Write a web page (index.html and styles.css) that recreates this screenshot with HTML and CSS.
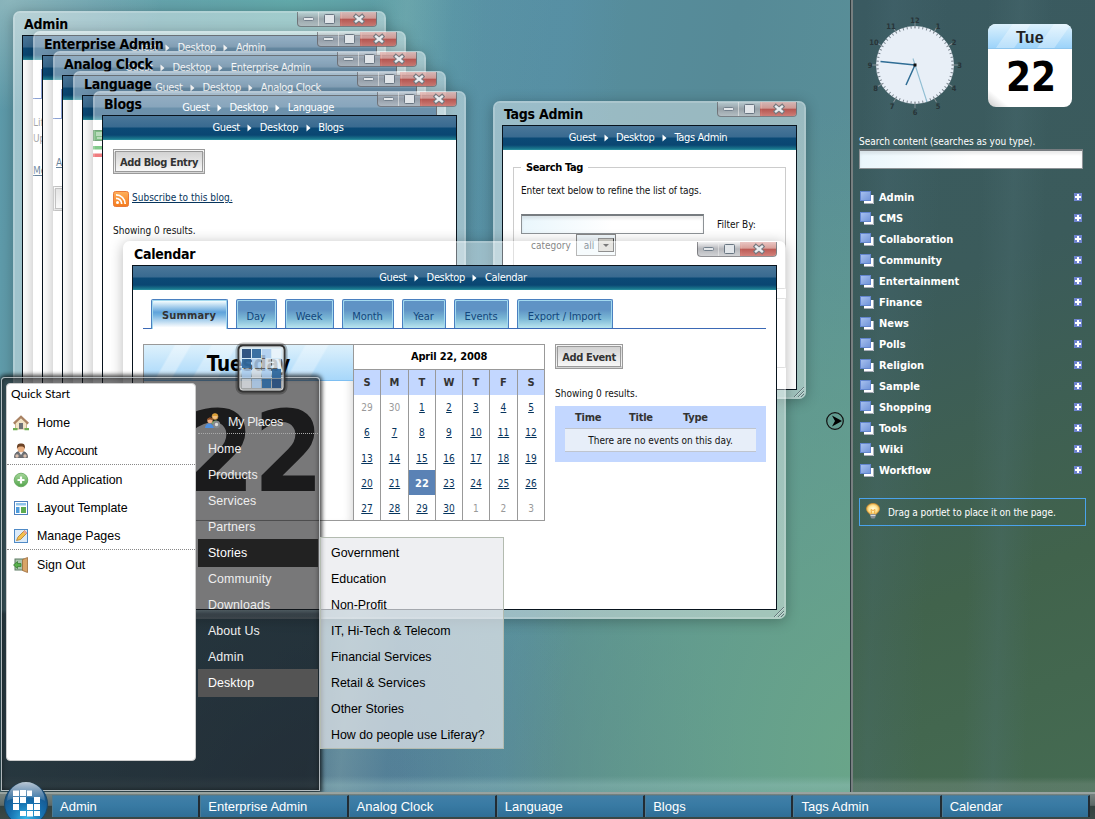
FILE: index.html
```html
<!DOCTYPE html>
<html lang="en">
<head>
<meta charset="utf-8">
<title>Desktop</title>
<link rel="stylesheet" href="styles.css">
</head>
<body>
<svg class="defs" width="0" height="0">
  <defs>
    <linearGradient id="gBlue" x1="0" y1="0" x2="1" y2="1"><stop offset="0" stop-color="#a9c2ef"/><stop offset="1" stop-color="#6f93d8"/></linearGradient>
    <linearGradient id="gGreen" x1="0" y1="0" x2="0" y2="1"><stop offset="0" stop-color="#a5d69a"/><stop offset="1" stop-color="#55a54d"/></linearGradient>
    <linearGradient id="gRss" x1="0" y1="0" x2="0" y2="1"><stop offset="0" stop-color="#ffb05c"/><stop offset="1" stop-color="#f47a1c"/></linearGradient>
    <radialGradient id="gBulb"><stop offset="0" stop-color="#fffbe0"/><stop offset=".6" stop-color="#ffe79a"/><stop offset="1" stop-color="#e9b04c"/></radialGradient>
    <radialGradient id="gOrb" cx=".5" cy=".85" r=".8"><stop offset="0" stop-color="#35b6e8"/><stop offset=".5" stop-color="#176fae"/><stop offset="1" stop-color="#164a7c"/></radialGradient>
    <linearGradient id="gShine" x1="0" y1="0" x2="0" y2="1"><stop offset="0" stop-color="#fff" stop-opacity=".7"/><stop offset="1" stop-color="#fff" stop-opacity=".1"/></linearGradient>
  </defs>
  <symbol id="arrow" viewBox="0 0 5 8"><path d="M.5 0.500 4.500 4 .5 7.500z" fill="#fff"/></symbol>
  <symbol id="controls" viewBox="0 0 80 15">
    <rect x="6.500" y="6.500" width="10" height="3" rx="1" fill="#e4e7ea" stroke="#74818d"/>
    <rect x="27.500" y="3.500" width="10" height="9" rx="1" fill="#e2e6ea" stroke="#687581"/>
    <path d="M59 5.500l6 5M65 5.500l-6 5" stroke="#77797f" stroke-width="4.500" stroke-linecap="square"/>
    <path d="M59 5.500l6 5M65 5.500l-6 5" stroke="#e9edf0" stroke-width="2.300" stroke-linecap="square"/>
  </symbol>
  <symbol id="grip" viewBox="0 0 10 10"><path d="M0 10 10 0M4 10l6-6M7 10l3-3" stroke="#62777a" fill="none"/><path d="M1 10 10 1M5 10l5-5" stroke="#d9e5e5" stroke-width=".7" fill="none"/></symbol>
  <symbol id="category" viewBox="0 0 14 13"><rect x="4" y="4" width="10" height="9" fill="#fff"/><path d="M4 12.500h9.500V4" stroke="#a9aeb8" fill="none"/><rect x=".5" y=".5" width="10" height="9" fill="url(#gBlue)" stroke="#6386cf"/></symbol>
  <symbol id="plus" viewBox="0 0 8 8"><rect width="8" height="8" fill="#6f84cf"/><path d="M4 1v6M1 4h6" stroke="#fff" stroke-width="2"/></symbol>
</svg>

<main class="desktop">
  <section class="window w-admin">
    <header class="title">Admin</header><div class="controls"><svg><use href="#controls"/></svg></div>
    <div class="pane">
      <nav class="crumbs">Guest<svg><use href="#arrow"/></svg>Desktop<svg><use href="#arrow"/></svg>Admin</nav>
      <div class="peek admin-peek"><i class="peek-tab"></i><p>Lifetime</p><p>Uptime</p><a>Memory</a></div>
    </div>
  </section>
  <section class="window w-enterprise">
    <header class="title">Enterprise Admin</header><div class="controls"><svg><use href="#controls"/></svg></div>
    <div class="pane">
      <nav class="crumbs">Guest<svg><use href="#arrow"/></svg>Desktop<svg><use href="#arrow"/></svg>Enterprise Admin</nav>
      <div class="peek ent-peek"><i class="peek-tab"></i><a>Add</a><button class="btn">Search</button></div>
    </div>
  </section>
  <section class="window w-clock">
    <header class="title">Analog Clock</header><div class="controls"><svg><use href="#controls"/></svg></div>
    <div class="pane"><nav class="crumbs">Guest<svg><use href="#arrow"/></svg>Desktop<svg><use href="#arrow"/></svg>Analog Clock</nav></div>
  </section>
  <section class="window w-language">
    <header class="title">Language</header><div class="controls"><svg><use href="#controls"/></svg></div>
    <div class="pane">
      <nav class="crumbs">Guest<svg><use href="#arrow"/></svg>Desktop<svg><use href="#arrow"/></svg>Language</nav>
      <div class="flags">
        <svg viewBox="0 0 16 11"><rect x=".5" y=".5" width="15" height="10" fill="#2f9238" stroke="#1c6626"/><path d="M3 3h9M3 5h8M4 8h8" stroke="#e8f3e5"/></svg>
        <svg viewBox="0 0 16 11"><rect width="16" height="11" fill="#fff"/><rect width="16" height="3.500" fill="#2fa53c"/><rect y="7.500" width="16" height="3.500" fill="#e5262b"/></svg>
      </div>
    </div>
  </section>
  <section class="window w-blogs">
    <header class="title">Blogs</header><div class="controls"><svg><use href="#controls"/></svg></div>
    <div class="pane">
      <nav class="crumbs">Guest<svg><use href="#arrow"/></svg>Desktop<svg><use href="#arrow"/></svg>Blogs</nav>
      <div class="blogs-body">
        <button class="btn wide">Add Blog Entry</button>
        <p class="feed"><svg viewBox="0 0 16 16"><rect x=".5" y=".5" width="15" height="15" rx="2" fill="url(#gRss)" stroke="#e8793a"/><circle cx="4.500" cy="11.500" r="1.500" fill="#fff"/><path d="M3 7.300a5.700 5.700 0 0 1 5.700 5.700M3 3.800A9.200 9.200 0 0 1 12.200 13" stroke="#fff" stroke-width="1.700" fill="none"/></svg><a>Subscribe to this blog.</a></p>
        <p>Showing 0 results.</p>
      </div>
    </div>
  </section>

  <section class="window w-tags">
    <header class="title">Tags Admin</header><div class="controls"><svg><use href="#controls"/></svg></div>
    <div class="pane">
      <nav class="crumbs">Guest<svg><use href="#arrow"/></svg>Desktop<svg><use href="#arrow"/></svg>Tags Admin</nav>
      <fieldset class="tag-search">
        <legend>Search Tag</legend>
        <p>Enter text below to refine the list of tags.</p>
        <div class="filter"><span class="field"></span><label>Filter By:</label></div>
        <div class="category"><label>category</label><span class="select">all<b></b></span></div>
      </fieldset>
      <div class="tag-results"></div>
    </div>
    <svg class="grip"><use href="#grip"/></svg>
  </section>

  <section class="window w-calendar">
    <header class="title">Calendar</header><div class="controls"><svg><use href="#controls"/></svg></div>
    <div class="pane">
      <nav class="crumbs">Guest<svg><use href="#arrow"/></svg>Desktop<svg><use href="#arrow"/></svg>Calendar</nav>
      <div class="tabs">
        <a class="t-summary on">Summary</a><a class="t-day">Day</a><a class="t-week">Week</a><a class="t-month">Month</a><a class="t-year">Year</a><a class="t-events">Events</a><a class="t-export">Export / Import</a>
      </div>
      <div class="cal-body">
        <div class="today"><h2>Tuesday</h2><strong>22</strong></div>
        <table class="month">
          <colgroup><col class="c27"><col class="c28"><col class="c27"><col class="c27"><col class="c27"><col class="c28"><col class="c27"></colgroup>
          <tr><th colspan="7" class="month-name">April 22, 2008</th></tr>
          <tr class="days"><th>S</th><th>M</th><th>T</th><th>W</th><th>T</th><th>F</th><th>S</th></tr>
          <tr><td class="off">29</td><td class="off">30</td><td>1</td><td>2</td><td>3</td><td>4</td><td>5</td></tr>
          <tr><td>6</td><td>7</td><td>8</td><td>9</td><td>10</td><td>11</td><td>12</td></tr>
          <tr><td>13</td><td>14</td><td>15</td><td>16</td><td>17</td><td>18</td><td>19</td></tr>
          <tr><td>20</td><td>21</td><td class="now">22</td><td>23</td><td>24</td><td>25</td><td>26</td></tr>
          <tr><td>27</td><td>28</td><td>29</td><td>30</td><td class="off">1</td><td class="off">2</td><td class="off">3</td></tr>
        </table>
        <div class="events">
          <button class="btn">Add Event</button>
          <p>Showing 0 results.</p>
          <div class="event-table"><div class="event-head"><b>Time</b><b>Title</b><b>Type</b></div><div class="event-none">There are no events on this day.</div></div>
        </div>
      </div>
    </div>
    <svg class="grip"><use href="#grip"/></svg>
  </section>

  <svg class="collapse" viewBox="0 0 18 18"><circle cx="9" cy="9" r="8.300" fill="none" stroke="#111" stroke-width="1.200"/><path d="M6 3.500 16 9 6 14.500 9 9z" fill="#000"/></svg>

  <aside class="sidebar">
    <div class="gadgets">
      <svg class="clock" viewBox="-50 -50 100 100">
        <circle r="39" fill="#e8eff7"/>
        <circle r="37.700" fill="none" stroke="#77828c" stroke-width="2.600" pathLength="360" stroke-dasharray="1.500 4.500" stroke-dashoffset=".75"/>
        <circle r="40" fill="none" stroke="#8b959b" stroke-width="6" pathLength="360" stroke-dasharray="1.300 28.700" stroke-dashoffset=".65"/>
        <g class="numerals"><text y="-42.500">12</text><text x="23" y="-36">1</text><text x="39" y="-20">2</text><text x="44.500" y="3">3</text><text x="39" y="26">4</text><text x="23" y="44">5</text><text y="49.500">6</text><text x="-23" y="44">7</text><text x="-39.500" y="26">8</text><text x="-45" y="3">9</text><text x="-41" y="-20">10</text><text x="-24" y="-36">11</text></g>
        <path d="M-2-6.500 12 37" stroke="#8fbdd2" stroke-width="1.100"/>
        <path d="M0 0-34.500-3.500M0 0-9 20" stroke="#2f6d95" stroke-width="1.500"/>
        <rect x="-1.500" y="-1.500" width="3" height="3" fill="#111"/>
      </svg>
      <div class="date"><span>Tue</span><strong>22</strong></div>
    </div>
    <label class="search-label">Search content (searches as you type).</label>
    <div class="field search"></div>
    <ul class="categories">
      <li><svg class="ic"><use href="#category"/></svg>Admin<svg class="pl"><use href="#plus"/></svg></li>
      <li><svg class="ic"><use href="#category"/></svg>CMS<svg class="pl"><use href="#plus"/></svg></li>
      <li><svg class="ic"><use href="#category"/></svg>Collaboration<svg class="pl"><use href="#plus"/></svg></li>
      <li><svg class="ic"><use href="#category"/></svg>Community<svg class="pl"><use href="#plus"/></svg></li>
      <li><svg class="ic"><use href="#category"/></svg>Entertainment<svg class="pl"><use href="#plus"/></svg></li>
      <li><svg class="ic"><use href="#category"/></svg>Finance<svg class="pl"><use href="#plus"/></svg></li>
      <li><svg class="ic"><use href="#category"/></svg>News<svg class="pl"><use href="#plus"/></svg></li>
      <li><svg class="ic"><use href="#category"/></svg>Polls<svg class="pl"><use href="#plus"/></svg></li>
      <li><svg class="ic"><use href="#category"/></svg>Religion<svg class="pl"><use href="#plus"/></svg></li>
      <li><svg class="ic"><use href="#category"/></svg>Sample<svg class="pl"><use href="#plus"/></svg></li>
      <li><svg class="ic"><use href="#category"/></svg>Shopping<svg class="pl"><use href="#plus"/></svg></li>
      <li><svg class="ic"><use href="#category"/></svg>Tools<svg class="pl"><use href="#plus"/></svg></li>
      <li><svg class="ic"><use href="#category"/></svg>Wiki<svg class="pl"><use href="#plus"/></svg></li>
      <li><svg class="ic"><use href="#category"/></svg>Workflow<svg class="pl"><use href="#plus"/></svg></li>
    </ul>
    <div class="hint"><svg viewBox="0 0 14 16"><path d="M7 .5C3 .5.5 3 .5 6c0 2.500 2.500 4 3.500 5.500h6C11 10 13.500 8.500 13.500 6c0-3-2.500-5.500-6.500-5.500z" fill="url(#gBulb)" stroke="#d9922c" stroke-width=".7"/><path d="M4.500 11h5v3l-1 1.500h-3l-1-1.500z" fill="#8d9196"/><path d="M5.500 10.500 5 6.500l2 1 2-1-.5 4" fill="none" stroke="#f0a93a"/><path d="M4.500 12.500h5" stroke="#d6d9dc"/></svg>Drag a portlet to place it on the page.</div>
  </aside>
</main>

<section class="start-menu">
  <div class="quick">
    <h3>Quick Start</h3>
    <ul>
      <li><svg viewBox="0 0 16 16"><path d="M2.500 7.500 8 2.500l5.500 5V14h-11z" fill="#f2e4c6" stroke="#b69b68" stroke-width=".7"/><path d="M.8 8.600 8 1.700l7.200 6.900" fill="none" stroke="#a98263" stroke-width="2.200"/><rect x="6" y="8" width="4" height="6" fill="#6f7276"/><path d="M0 14.200h4.500M11.500 14.200H16" stroke="#6fae52" stroke-width="2.200"/></svg>Home</li>
      <li><svg viewBox="0 0 16 16"><path d="M1.500 14.500c0-5 2.500-6 6.500-6s6.500 1 6.500 6z" fill="#6e7074" stroke="#494b4f" stroke-width=".7"/><path d="m6 9 2 3 2-3z" fill="#f4f4f4"/><circle cx="8" cy="5.600" r="3.600" fill="#eab083"/><path d="M4 6C3.700 1.500 5 .5 8 .5S12.300 1.500 12 6c-.8-2-2-2.500-4-2.500S4.800 4 4 6z" fill="#6b4225"/><circle cx="4" cy="13" r="1.700" fill="#d9bfae"/><circle cx="12" cy="13" r="1.700" fill="#d9bfae"/></svg><span class="tight">My Account</span></li>
      <li class="rule"><svg viewBox="0 0 16 16"><circle cx="8" cy="8" r="6.800" fill="url(#gGreen)" stroke="#5fa558" stroke-width=".8"/><path d="M8 4.500v7M4.500 8h7" stroke="#fff" stroke-width="2.200"/></svg>Add Application</li>
      <li><svg viewBox="0 0 16 16"><rect x="1.500" y="1.500" width="13" height="13" fill="#fff" stroke="#4f81bd"/><rect x="3" y="3" width="10" height="2.500" fill="#8fc3ea"/><rect x="3" y="7" width="3.500" height="6" fill="#4d9bdb"/><rect x="8" y="7" width="5" height="6" fill="#5dab51"/></svg>Layout Template</li>
      <li><svg viewBox="0 0 16 16"><rect x="1.500" y="1.500" width="13" height="13" fill="#dcebf9" stroke="#4f8ac6"/><path d="M3.500 12.500 5 9l6.500-6.500 2.500 2.500L7.500 11.500z" fill="#f5c04d" stroke="#a97b2f" stroke-width=".8"/><path d="m11 3 2.500 2.500" stroke="#eaa1a0" stroke-width="2"/></svg>Manage Pages</li>
      <li class="rule"><svg viewBox="0 0 16 16"><rect x="2" y="2" width="9" height="11" fill="#aac4ae" stroke="#5d7b62"/><path d="m9.500 2.500 5-2v15l-5-2z" fill="#d8a467" stroke="#9b6a38" stroke-width=".8"/><path d="M.5 8 4.500 4.500v2H8v3H4.500v2z" fill="#58b04b" stroke="#2f7a2a" stroke-width=".7"/></svg>Sign Out</li>
    </ul>
  </div>
  <div class="places">
    <h3><svg viewBox="0 0 16 16"><circle cx="10" cy="3.500" r="3" fill="#f0be80" stroke="#b9832f" stroke-width=".7"/><path d="M7.500 3c0-3 5-3 5 0" fill="#dba034"/><path d="M7 11c0-4 6-5 7-1z" fill="#74b95c"/><circle cx="5" cy="7.500" r="2.700" fill="#efb184"/><path d="M2.200 7.500c0-4 5.600-4 5.600 0-1.500-1.500-4-1.500-5.600 0z" fill="#8a4b22"/><path d="M0 15c0-6 8-6 9 0z" fill="#4d8fe0"/><circle cx="11.500" cy="11.500" r="2.700" fill="#ddd" stroke="#85898d" stroke-width="2"/></svg><span class="tight">My Places</span></h3>
    <ul><li>Home</li><li>Products</li><li>Services</li><li>Partners</li><li class="hover">Stories</li><li>Community</li><li>Downloads</li><li>About Us</li><li>Admin</li><li class="here">Desktop</li></ul>
  </div>
</section>
<svg class="theme-badge" viewBox="0 0 54 54">
  <rect x="3" y="3" width="47" height="47" rx="5" fill="none" stroke="#000" stroke-opacity=".25" stroke-width="5"/>
  <rect x="3.500" y="3.500" width="46" height="46" rx="4" fill="#e4eaee" fill-opacity=".4" stroke="#333" stroke-width="2"/>
  <rect x="5" y="5" width="43" height="43" rx="3" fill="none" stroke="#eee" stroke-opacity=".7"/>
  <g><path fill="#294e7c" fill-opacity=".95" d="M7 7h9v9H7zM37 37h9v9h-9z"/><path fill="#2c659a" fill-opacity=".92" d="M17 7h9v9h-9zM7 17h9v9H7zM37 27h9v9h-9zM27 37h9v9h-9z"/><path fill="#a8c9ee" fill-opacity=".75" d="M27 7h9v9h-9zM17 17h9v9h-9zM7 27h9v9H7zM27 27h9v9h-9zM17 37h9v9h-9z"/><path fill="#eff7fc" fill-opacity=".7" d="M37 7h9v9h-9zM37 17h9v9h-9z"/><path fill="#d8dde2" fill-opacity=".7" d="M27 17h9v9h-9zM17 27h9v9h-9zM7 37h9v9H7z"/></g>
</svg>

<ul class="submenu"><li>Government</li><li>Education</li><li>Non-Profit</li><li>IT, Hi-Tech &amp; Telecom</li><li>Financial Services</li><li>Retail &amp; Services</li><li>Other Stories</li><li>How do people use Liferay?</li></ul>

<footer class="taskbar"><a>Admin</a><a>Enterprise Admin</a><a>Analog Clock</a><a>Language</a><a>Blogs</a><a>Tags Admin</a><a>Calendar</a></footer>
<svg class="orb" viewBox="0 0 44 38">
  <circle cx="22" cy="23" r="21.500" fill="url(#gOrb)" stroke="#1a4768"/>
  <path d="M3 20a19 19 0 0 1 38 0C32 15 12 15 3 20z" fill="url(#gShine)"/>
  <path d="M9 9.500h6v5.500H9zM16 9h6v6h-6zM23 9.500h5v5.500h-5zM9 16h6v6H9zM16 16h6v6h-6zM30 16h6v6h-6zM9 23h6v6H9zM23 23h6v6h-6zM30 23h6v6h-6zM16 30h6v5h-6zM23 30h6v5.500h-6zM30 30h6v5h-6z" fill="#fff"/>
</svg>
</body>
</html>
```

FILE: styles.css
```css
* { box-sizing: border-box; }
body { margin: 0; width: 1095px; height: 819px; position: relative; overflow: hidden; font: 10px "DejaVu Sans Condensed", "DejaVu Sans", sans-serif; font-stretch: condensed; color: #111; }
ul, h2, h3, p { margin: 0; padding: 0; list-style: none; }
svg { display: block; flex: none; }
.defs { position: absolute; }

.desktop {
  position: absolute; inset: 0 0 27px 0;
  background:
    linear-gradient(to bottom, transparent 776px, rgba(160,200,200,.35) 785px, rgba(160,200,200,.25)),
    radial-gradient(ellipse 150px 110px at 10px 0, rgba(170,200,200,.6), transparent 100%),
    radial-gradient(ellipse 260px 400px at 290px 0, rgba(100,180,172,.6), transparent 75%),
    linear-gradient(95deg, transparent 32%, rgba(150,190,192,.28) 35%, rgba(90,150,180,.2) 39%, rgba(90,150,185,.22) 49%, transparent 54%),
    radial-gradient(ellipse 460px 650px at 860px 760px, rgba(106,166,136,.95), rgba(106,166,136,.5) 55%, transparent 100%),
    radial-gradient(ellipse 420px 300px at 330px 800px, rgba(80,112,136,.8), transparent),
    linear-gradient(100deg, #5c99a9 0%, #659fac 12%, #568e9e 45%, #568a97 60%, #5a9198 78%, #5f9a9c 100%);
}

/* windows */
.window { position: absolute; padding: 22px 7px 7px; width: 373px; height: 400px; border: 2px solid rgba(255,255,255,.5); border-radius: 7px; background: rgba(255,255,255,.4); background-clip: padding-box; box-shadow: 0 2px 14px rgba(0,0,0,.28); }
.w-admin { left: 13px; top: 11px; }
.w-enterprise { left: 33px; top: 31px; }
.w-clock { left: 53px; top: 51px; }
.w-language { left: 73px; top: 71px; }
.w-blogs { left: 93px; top: 91px; }
.w-tags { left: 493px; top: 101px; width: 313px; height: 298px; }
.w-calendar { left: 123px; top: 241px; width: 663px; height: 378px; }
.title { position: absolute; left: 9px; top: 1px; font-weight: bold; font-size: 14px; letter-spacing: -.25px; line-height: 20px; color: #000; white-space: nowrap; }
.controls { position: absolute; right: 7px; top: -1px; width: 80px; height: 15px; border: 1px solid rgba(80,80,85,.6); border-top: 0; border-radius: 0 0 4px 4px; background: linear-gradient(rgba(225,225,228,.4), rgba(150,152,158,.7) 50%, rgba(190,192,196,.7)); overflow: hidden; }
.controls::before { content: ""; position: absolute; left: 20px; top: 0; width: 22px; height: 15px; border: solid rgba(235,235,235,.6); border-width: 0 1px; }
.controls::after { content: ""; position: absolute; left: 42px; right: 0; top: 0; height: 15px; background: linear-gradient(rgba(230,170,165,.6), rgba(230,150,140,.7) 40%, rgba(190,70,62,.8) 50%, rgba(215,115,105,.8)); }
.controls svg { position: absolute; z-index: 1; left: -1px; top: -1px; width: 80px; height: 15px; }
.pane { height: 100%; background: #fff; border: 1px solid #08131d; overflow: hidden; }
.crumbs { height: 24px; padding: 0 3px 1px 0; display: flex; align-items: center; justify-content: center; gap: 7.500px; color: #fff; font-size: 11px; letter-spacing: -.35px; background: linear-gradient(#4a7799, #396a90 11px, #0b4a76 12px, #0a4672 19px, #1b7a8f 23px, #3297a5); }
.crumbs svg { width: 5px; height: 8px; }
.grip { position: absolute; right: 0; bottom: 0; width: 10px; height: 10px; }

.btn { font: bold 11px "DejaVu Sans Condensed", "DejaVu Sans", sans-serif; font-stretch: condensed; letter-spacing: -.38px; color: #333; height: 25px; padding: 1px 0 0; border: 3px double #9a9a9a; background: linear-gradient(#d2d2d2, #f7f7f7); width: 68px; display: block; white-space: nowrap; }
.btn.wide { width: 92px; }
a { color: #06345c; text-decoration: underline; }
.blogs-body { padding: 9px 10px; }
.feed { display: flex; gap: 3px; padding: 17px 0 18px; line-height: 13px; }
.feed svg { width: 16px; height: 16px; }
.peek { padding: 61px 10px; color: #666; }
.peek p { line-height: 16px; }
.admin-peek { padding-top: 9px; }
.peek-tab { display: block; width: 9px; height: 30px; border: solid #3f63b8; border-width: 0 1px 1px 0; margin-bottom: 16px; }
.admin-peek a { display: block; margin-top: 18px; }
.ent-peek { padding-top: 9px; }
.ent-peek a { display: block; margin: 38px 0 18px 3px; }
.flags { padding: 10px; display: grid; gap: 5px; }
.flags svg { width: 16px; height: 11px; }

.tag-search { margin: 11px 10px 0; padding: 0 7px; height: 128px; border: 1px solid #ccc; min-width: 0; }
.tag-search legend { font-weight: bold; font-size: 11px; letter-spacing: -.4px; line-height: 13px; padding: 0 5px; color: #000; }
.tag-search p { padding-top: 10px; line-height: 13px; white-space: nowrap; letter-spacing: -.11px; }
.field { border: 1px solid #8d9296; border-top: 2px solid #777c80; background: linear-gradient(100deg, #e9f6fc, #fff 50%); box-shadow: inset 0 3px 3px rgba(0,0,0,.08); }
.filter { display: flex; align-items: center; gap: 13px; margin-top: 17px; }
.filter .field { width: 183px; height: 20px; }
.category { display: flex; align-items: center; gap: 5px; padding-left: 10px; color: #333; }
.select { width: 40px; height: 22px; border: 1px solid #888; padding-left: 7px; display: flex; align-items: center; gap: 4px; background: #f1f8fc; color: #3d5261; }
.select b { width: 16px; height: 14px; background: #d8d6cf; border: 1px outset #999; display: flex; align-items: center; justify-content: center; }
.select b::after { content: ""; border: 3px solid transparent; border-top-color: #222; border-bottom: 0; }
.tag-results { margin: 9px 10px; height: 70px; border: 1px solid #ccc; }

/* calendar window */
.tabs { height: 39px; margin: 0 10px; padding: 9px 0 0 8px; display: flex; gap: 8px; border-bottom: 1px solid #3b69b5; }
.tabs a { height: 29px; border: 1px solid #4a80c0; border-bottom: 0; border-radius: 2px 2px 0 0; background: linear-gradient(#5f93c5 35%, #79b6d5 65%, #b9e5ef); box-shadow: inset 1px 1px #a2d9ef, inset -1px 0 #a2d9ef; color: #12467d; text-decoration: none; font-size: 11px; letter-spacing: -.1px; line-height: 33px; text-align: center; white-space: nowrap; padding-right: 1px; }
.tabs .on { height: 30px; font-weight: bold; color: #333; letter-spacing: .2px; background: linear-gradient(#edf9fd 5%, #5fa3db 42%, #71b1e0 52%, #fff 95%); line-height: 31px; }
.t-summary { width: 77px; } .t-day { width: 41px; } .t-week { width: 49px; } .t-month { width: 52px; } .t-year { width: 44px; } .t-events { width: 55px; } .t-export { width: 96px; }
.cal-body { display: flex; padding: 15px 10px; }
.today { width: 210px; height: 177px; border: 1px solid #999; border-right: 0; box-shadow: inset -8px 0 8px -6px rgba(0,0,0,.15); }
.today h2 { height: 36px; line-height: 38px; text-align: center; font-size: 20.500px; letter-spacing: -.1px; color: #000; border-bottom: 1px solid #7ebff2; background: linear-gradient(120deg, transparent 13%, rgba(255,255,255,.35) 14% 20%, transparent 21% 29%, rgba(255,255,255,.3) 30% 40%, transparent 41% 70%, rgba(255,255,255,.3) 71% 80%, transparent 81%), linear-gradient(#ddf1fc, #a7d7fa); }
.today strong { display: block; text-align: center; padding-left: 10px; font-size: 112px; line-height: 142px; color: #222; letter-spacing: -1px; }
.month { width: 192px; table-layout: fixed; border-collapse: collapse; height: 177px; }
.month th, .month td { border: solid #999; border-width: 0 1px; padding: 2px 0 0; height: 25px; text-align: center; color: #06345c; text-decoration: underline; font-size: 10px; line-height: 12px; }
.month tr:last-child td { border-bottom-width: 1px; }
.month .month-name { border-width: 1px; padding-top: 0; text-decoration: none; color: #000; font-size: 11px; letter-spacing: -.15px; }
.month .days th { background: #c3d7ff; text-decoration: none; color: #333; font-size: 11px; }
.month .off { color: #999; text-decoration: none; }
.month .now { background: #5a82b5; color: #fff; font-weight: bold; font-size: 11px; text-decoration: none; }
.c27 { width: 27px; } .c28 { width: 28px; }
.events { margin-left: 10px; width: 211px; }
.events p { padding: 18px 0 6px; line-height: 13px; }
.event-table { height: 56px; background: #c3d7ff; padding: 0 10px; }
.event-head { display: flex; height: 22px; align-items: center; padding: 1px 0 0 10px; font-size: 11px; color: #333; letter-spacing: -.25px; }
.event-head b { width: 54px; }
.event-none { height: 24px; line-height: 23px; text-align: center; background: #e7eef9; border: solid #bfc5cf; border-width: 1px 0; }

/* sidebar */
.collapse { position: absolute; left: 826px; top: 412px; width: 18px; height: 18px; }
.sidebar { position: absolute; right: 0; top: 0; width: 244px; height: 792px; padding: 15px 9px 0 6px; border-left: 2px solid #777f80; box-shadow: -1px 0 #2e3c3f; color: #fff; background: linear-gradient(to bottom, transparent 777px, rgba(130,150,140,.35) 784px), linear-gradient(92deg, transparent 5%, rgba(75,110,120,.25) 15%, transparent 35%, transparent 50%, rgba(80,115,120,.26) 62%, transparent 74%), linear-gradient(160deg, #3a5a61, #3b5b5b 35%, #41634c 72%, #456b52); }
.gadgets { display: flex; height: 121px; }
.clock { width: 100px; height: 100px; margin-left: 6px; }
.numerals { font: bold 7.500px "DejaVu Sans Condensed", sans-serif; text-anchor: middle; fill: #283438; }
.date { margin: 9px 0 0 23px; width: 84px; height: 83px; border-radius: 8px; background: linear-gradient(40deg, #c9c9c9, #fff 12%); overflow: hidden; text-align: center; color: #000; }
.date span { display: block; height: 25px; border-bottom: 1px solid #8fc6ee; background: linear-gradient(125deg, transparent 24%, rgba(255,255,255,.3) 25% 42%, transparent 43% 65%, rgba(255,255,255,.3) 66% 82%, transparent 83%), linear-gradient(#dbf1fd, #9cd3fa); font: bold 16px/27px "Liberation Sans", sans-serif; color: #222; letter-spacing: .2px; }
.date strong { display: block; font-size: 40px; line-height: 56px; padding-left: 2px; }
.search-label { display: block; height: 13px; line-height: 12px; white-space: nowrap; }
.search { width: 224px; height: 20px; }
.categories { padding-top: 18px; height: 329px; }
.categories li { height: 21px; display: flex; align-items: center; font-weight: bold; font-size: 11px; width: 223px; letter-spacing: -.05px; }
.categories .ic { width: 14px; height: 13px; margin: 0 5px 0 1px; }
.categories .pl { width: 8px; height: 8px; margin: -2px 0 0 auto; }
.hint { width: 227px; height: 28px; border: 1px solid #4aa3ec; padding-left: 6px; display: flex; align-items: center; gap: 8px; white-space: nowrap; letter-spacing: -.08px; }
.hint svg { width: 14px; height: 16px; margin-top: -2px; }

/* start menu */
.start-menu { position: absolute; left: 1px; top: 377px; width: 319px; height: 414px; display: flex; gap: 2px; padding: 5px 1px 0 4px; border: 1px solid rgba(220,225,228,.75); border-radius: 4px 4px 0 0; background: linear-gradient(rgba(14,20,26,0) 232px, rgba(10,14,24,.34) 236px), rgba(22,22,24,.58); box-shadow: 0 0 4px 2px rgba(0,0,0,.75), inset 0 0 5px rgba(0,0,0,.5); font: 12.400px "Liberation Sans", sans-serif; }
.start-menu h3 { font-weight: normal; }
.quick { width: 190px; height: 378px; background: #fff; border: 1px solid #ccc; border-radius: 4px; }
.quick h3 { padding: 3px 0 0 4px; height: 24px; font: 12px/13px Lato, sans-serif; color: #000; }
.quick li { height: 28px; display: flex; align-items: center; gap: 8px; padding: 2px 0 0 6px; color: #000; }
.quick li.rule { height: 29px; border-top: 1px dotted #888; }
.quick svg { width: 16px; height: 16px; }
.quick .tight { letter-spacing: -.4px; }
.places .tight { letter-spacing: -.3px; }
.places { width: 120px; color: #eee; }
.places h3 { height: 51px; padding: 31px 0 0 7px; display: flex; gap: 7px; font-size: 12.500px; border-bottom: 1px dotted #aaa; line-height: 16px; }
.places h3 svg { width: 16px; height: 16px; margin-top: -1px; }
.places ul { padding-top: 2px; }
.places li { height: 26px; line-height: 26px; padding-left: 10px; letter-spacing: .1px; }
.places .hover, .places .here { height: 28px; line-height: 28px; margin: -1px 0; background: #222; color: #fff; }
.places .here { background: #545454; }
.theme-badge { position: absolute; left: 235px; top: 342px; width: 54px; height: 54px; }
.submenu { position: absolute; left: 320px; top: 537px; width: 184px; height: 212px; padding: 2px 10px; border: 1px solid #b3bbb0; background: rgba(231,232,236,.7); font: 12.400px/26px "Liberation Sans", sans-serif; color: #000; white-space: nowrap; letter-spacing: 0; }

/* taskbar */
.taskbar { position: absolute; left: 0; right: 0; bottom: 0; height: 27px; display: flex; padding: 1px 5px 2px 52px; border-top: 2px solid #98a3a0; background: linear-gradient(#778380, #5c6967 45%, #33413f 50%, #3b4947); font: 13px/21px "Liberation Sans", sans-serif; }
.taskbar a { flex: 1; color: #fff; text-decoration: none; padding-left: 7px; border: 1px solid #4e7b93; border-width: 1px 2px 0 1px; border-right-color: #222c33; background: linear-gradient(#417fa7, #387aa3 45%, #306e96); }
.orb { position: absolute; left: 4px; top: 781px; width: 44px; height: 38px; }
```
